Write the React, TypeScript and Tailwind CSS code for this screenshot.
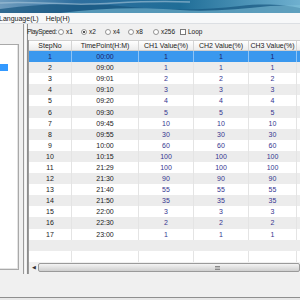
import React from "react";

const rows: [number, string, number][] = [
  [1, "00:00", 1],
  [2, "09:00", 1],
  [3, "09:01", 2],
  [4, "09:10", 3],
  [5, "09:20", 4],
  [6, "09:30", 5],
  [7, "09:45", 10],
  [8, "09:55", 30],
  [9, "10:00", 60],
  [10, "10:15", 100],
  [11, "21:29", 100],
  [12, "21:30", 90],
  [13, "21:40", 55],
  [14, "21:50", 35],
  [15, "22:00", 3],
  [16, "22:30", 2],
  [17, "23:00", 1],
];

const Radio = ({ checked }: { checked?: boolean }) => (
  <svg width="6" height="6" viewBox="0 0 6 6" className="shrink-0">
    <circle cx="3" cy="3" r="2.5" fill="#fff" stroke="#7a7a7a" strokeWidth="0.8" />
    {checked && <circle cx="3" cy="3" r="1.1" fill="#2a2a2a" />}
  </svg>
);

const Banner = () => (
  <div className="h-[13px] w-full overflow-hidden bg-[#4f86ad]">
    <svg width="300" height="13" viewBox="0 0 300 13" preserveAspectRatio="none">
      <defs>
        <linearGradient id="bg" x1="0" x2="1" y1="0" y2="0">
          <stop offset="0" stopColor="#6f9cbd" />
          <stop offset="0.25" stopColor="#2f6f9f" />
          <stop offset="0.6" stopColor="#1f6d97" />
          <stop offset="1" stopColor="#6fb0cf" />
        </linearGradient>
      </defs>
      <rect width="300" height="13" fill="url(#bg)" />
      <path d="M0 9 C40 4 80 2 120 6 C160 10 200 11 240 6 C265 3 285 5 300 8 L300 13 L0 13 Z" fill="#17557f" opacity="0.7" />
      <path d="M60 13 C100 8 140 7 180 10 C210 12 240 9 270 6 L300 5 L300 13 Z" fill="#7fc0d8" opacity="0.6" />
      <path d="M0 3 C30 1 60 5 90 4 C120 3 150 0 190 2" stroke="#a8c6da" strokeWidth="1.5" fill="none" opacity="0.6" />
    </svg>
  </div>
);

const ColW = ["w-[43px]", "w-[67px]", "w-[55px]", "w-[55px]", "w-[48px]", "w-[30px]"];

export default function App() {
  return (
    <div className="w-[300px] h-[300px] overflow-hidden bg-[#f0f0f0] flex flex-col font-['Liberation_Sans',Arial,sans-serif] text-[#1a1a1a]">
      <Banner />
      <div className="h-[11px] shrink-0 flex items-center gap-[7px] bg-[#f7f8f9] border-b border-[#dcdfe3] text-[7px] leading-none -ml-[1px]">
        <span>Language(L)</span>
        <span>Help(H)</span>
      </div>

      <div className="flex h-[250px] shrink-0">
        <div className="w-[19px] shrink-0 pt-[20px] pb-[4px]">
          <div className="h-full bg-white border border-[#a9a9a9] border-l-0 shadow-[inset_-1px_-1px_0_#e3e3e3]">
            <div className="mt-[19px] h-[7px] w-[8px] bg-[#3399ff]" />
          </div>
        </div>
        <div className="w-[9px] shrink-0 flex justify-end gap-[1px]">
          <div className="w-[1px] bg-[#9a9a9a]" />
          <div className="w-[1px] bg-[#fafafa]" />
          <div className="w-[1px] bg-[#8c8c8c]" />
        </div>

        <div className="flex-1 flex flex-col min-w-0">
          <div className="h-[16px] shrink-0 flex items-center text-[6.5px] leading-none -ml-[1px]">
            <span className="w-[31px] shrink-0 whitespace-nowrap tracking-[-0.35px]">PlaySpeed:</span>
            <div className="w-[23px] shrink-0 flex items-center gap-[2px]"><Radio /><span>x1</span></div>
            <div className="w-[24px] shrink-0 flex items-center gap-[2px]"><Radio checked /><span>x2</span></div>
            <div className="w-[23px] shrink-0 flex items-center gap-[2px]"><Radio /><span>x4</span></div>
            <div className="w-[25px] shrink-0 flex items-center gap-[2px]"><Radio /><span>x8</span></div>
            <div className="w-[27px] shrink-0 flex items-center gap-[2px]"><Radio /><span>x256</span></div>
            <div className="flex items-center gap-[2px]">
              <span className="w-[6px] h-[6px] bg-white border border-[#7a7a7a]" />
              <span>Loop</span>
            </div>
          </div>

          <div className="flex-1 flex flex-col border-l border-[#9c9c9c] bg-[#f0f0f0] min-w-0">
            <div className="flex h-[11px] shrink-0 bg-gradient-to-b from-white to-[#ececec] border-b border-t border-[#cfcfcf] text-[7px] leading-none">
              {["StepNo", "TimePoint(H:M)", "CH1 Value(%)", "CH2 Value(%)", "CH3 Value(%)", ""].map((h, i) => (
                <div key={i} className={`${ColW[i]} shrink-0 flex items-center justify-center border-r border-[#d5d5d5] whitespace-nowrap overflow-hidden`}>
                  {h}
                </div>
              ))}
            </div>

            {rows.map(([n, t, v], idx) => {
              const sel = idx === 0;
              const even = (idx + 1) % 2 === 0;
              const bg = sel ? "bg-[#3a98ee]" : even ? "bg-[#ececec]" : "bg-white";
              const line = sel ? "border-[#8fc4f5]" : "border-[#e4e4e4]";
              const dark = sel ? "text-[#1c1c6a]" : "text-[#1a1a1a]";
              const val = sel ? "text-[#1c1c6a]" : "text-[#35358f]";
              return (
                <div key={n} className={`flex h-[11.1px] shrink-0 text-[7px] leading-none ${bg}`}>
                  <div className={`${ColW[0]} shrink-0 flex items-center justify-center border-r ${line} ${dark}`}>{n}</div>
                  <div className={`${ColW[1]} shrink-0 flex items-center justify-center border-r ${line} ${dark}`}>{t}</div>
                  <div className={`${ColW[2]} shrink-0 flex items-center justify-center border-r ${line} ${val}`}>{v}</div>
                  <div className={`${ColW[3]} shrink-0 flex items-center justify-center border-r ${line} ${val}`}>{v}</div>
                  <div className={`${ColW[4]} shrink-0 flex items-center justify-center border-r ${line} ${val}`}>{v}</div>
                  <div className={`${ColW[5]} shrink-0`} />
                </div>
              );
            })}
            <div className="flex h-[11.1px] shrink-0 bg-[#ececec]">
              {ColW.map((w, i) => (
                <div key={i} className={`${w} shrink-0 border-r border-[#ececec]`} />
              ))}
            </div>
            <div className="flex h-[11.1px] shrink-0 bg-white">
              {ColW.map((w, i) => (
                <div key={i} className={`${w} shrink-0 border-r border-[#e4e4e4]`} />
              ))}
            </div>

            <div className="mt-[1px] h-[10px] shrink-0 flex items-center bg-[#f0f0f0]">
              <div className="w-[9px] shrink-0 flex items-center justify-center text-[5px] text-[#333]">◀</div>
              <div className="flex-1 h-[9px] flex items-center justify-end pr-[79px] border border-[#9a9a9a] rounded-[2px] bg-gradient-to-b from-[#f4f4f4] via-[#e2e2e2] to-[#cfcfcf]">
                <div className="w-[5px] h-[4px] border-y border-[#8a8a8a] bg-[#bdbdbd]" />
              </div>
            </div>
          </div>
        </div>
      </div>

      <div className="flex-1 border-b border-[#8f8f8f]" />
      <div className="h-[2px] shrink-0 bg-[#e8e8e8]" />
    </div>
  );
}
